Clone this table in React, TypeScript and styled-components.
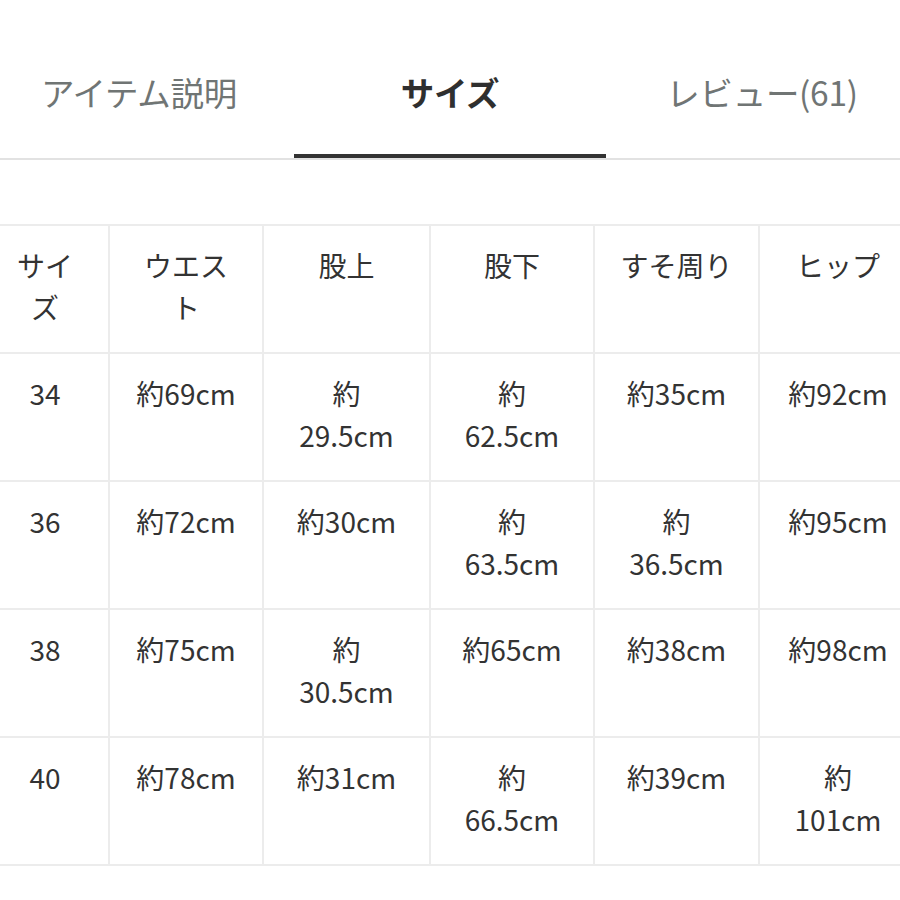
import React from "react";
import styled, { createGlobalStyle } from "styled-components";

const GlobalStyle = createGlobalStyle`
    html, body {
        margin: 0;
        padding: 0;
        background: #ffffff;
    }
    body {
        font-family: "Noto Sans CJK JP", "Noto Sans", sans-serif;
        color: #333333;
    }
`;

const tabs = [
    { label: "アイテム説明", active: false, pad: "0 16px 0 0" },
    { label: "サイズ", active: true, pad: "0" },
    { label: "レビュー(61)", active: false, pad: "0 0 0 18px" },
];

const columns = [
    { title: "サイ\nズ", width: 109, pad: 18 },
    { title: "ウエス\nト", width: 154, pad: 0 },
    { title: "股上", width: 167, pad: 0 },
    { title: "股下", width: 164, pad: 0 },
    { title: "すそ周り", width: 165, pad: 0 },
    { title: "ヒップ", width: 158, pad: 0 },
];

const rows = [
    ["34", "約69cm", "約\n29.5cm", "約\n62.5cm", "約35cm", "約92cm"],
    ["36", "約72cm", "約30cm", "約\n63.5cm", "約\n36.5cm", "約95cm"],
    ["38", "約75cm", "約\n30.5cm", "約65cm", "約38cm", "約98cm"],
    ["40", "約78cm", "約31cm", "約\n66.5cm", "約39cm", "約\n101cm"],
];

const App = () => {
    return (
        <Page>
            <GlobalStyle />
            <TabBar>
                {tabs.map(tab => (
                    <Tab key={tab.label} $active={tab.active} $pad={tab.pad}>
                        {tab.label}
                    </Tab>
                ))}
            </TabBar>
            <TableWrap>
                <SizeTable>
                    <colgroup>
                        {columns.map(col => (
                            <col key={col.title} style={{ width: col.width }} />
                        ))}
                    </colgroup>
                    <thead>
                        <tr>
                            {columns.map(col => (
                                <HeadCell key={col.title} $padRight={col.pad}>{col.title}</HeadCell>
                            ))}
                        </tr>
                    </thead>
                    <tbody>
                        {rows.map(row => (
                            <tr key={row[0]}>
                                {row.map((value, i) => (
                                    <Cell key={`c-${row[0]}-${i}`} $padRight={columns[i].pad}>{value}</Cell>
                                ))}
                            </tr>
                        ))}
                    </tbody>
                </SizeTable>
            </TableWrap>
        </Page>
    );
};

const Page = styled.div`
    width: 900px;
    min-height: 900px;
    background: #ffffff;
    overflow: hidden;
`;

const TabBar = styled.div`
    display: grid;
    grid-template-columns: 294px 312px 294px;
    height: 158px;
    border-bottom: 2px solid #e2e2e2;
`;

const Tab = styled.div<{ $active: boolean; $pad: string }>`
    display: flex;
    align-items: center;
    justify-content: center;
    padding: ${p => p.$pad};
    padding-top: 24px;
    font-size: 33.5px;
    letter-spacing: -0.3px;
    font-weight: ${p => (p.$active ? 700 : 400)};
    color: ${p => (p.$active ? "#2f2f2f" : "#707574")};
    box-shadow: ${p => (p.$active ? "inset 0 -4px 0 #333333" : "none")};
`;

const TableWrap = styled.div`
    margin-top: 64px;
    width: 900px;
    overflow: hidden;
`;

const SizeTable = styled.table`
    table-layout: fixed;
    width: 917px;
    border-collapse: collapse;
    border-top: 2px solid #ececec;
`;

const Cell = styled.td<{ $padRight: number }>`
    height: 128px;
    box-sizing: border-box;
    padding: 18px ${p => p.$padRight}px 0 0;
    vertical-align: top;
    text-align: center;
    white-space: pre-line;
    font-size: 28px;
    line-height: 42px;
    color: #333333;
    border-right: 2px solid #ececec;
    border-bottom: 2px solid #ececec;
`;

const HeadCell = styled(Cell).attrs({ as: "th" })`
    font-weight: 400;
`;

export default App;
